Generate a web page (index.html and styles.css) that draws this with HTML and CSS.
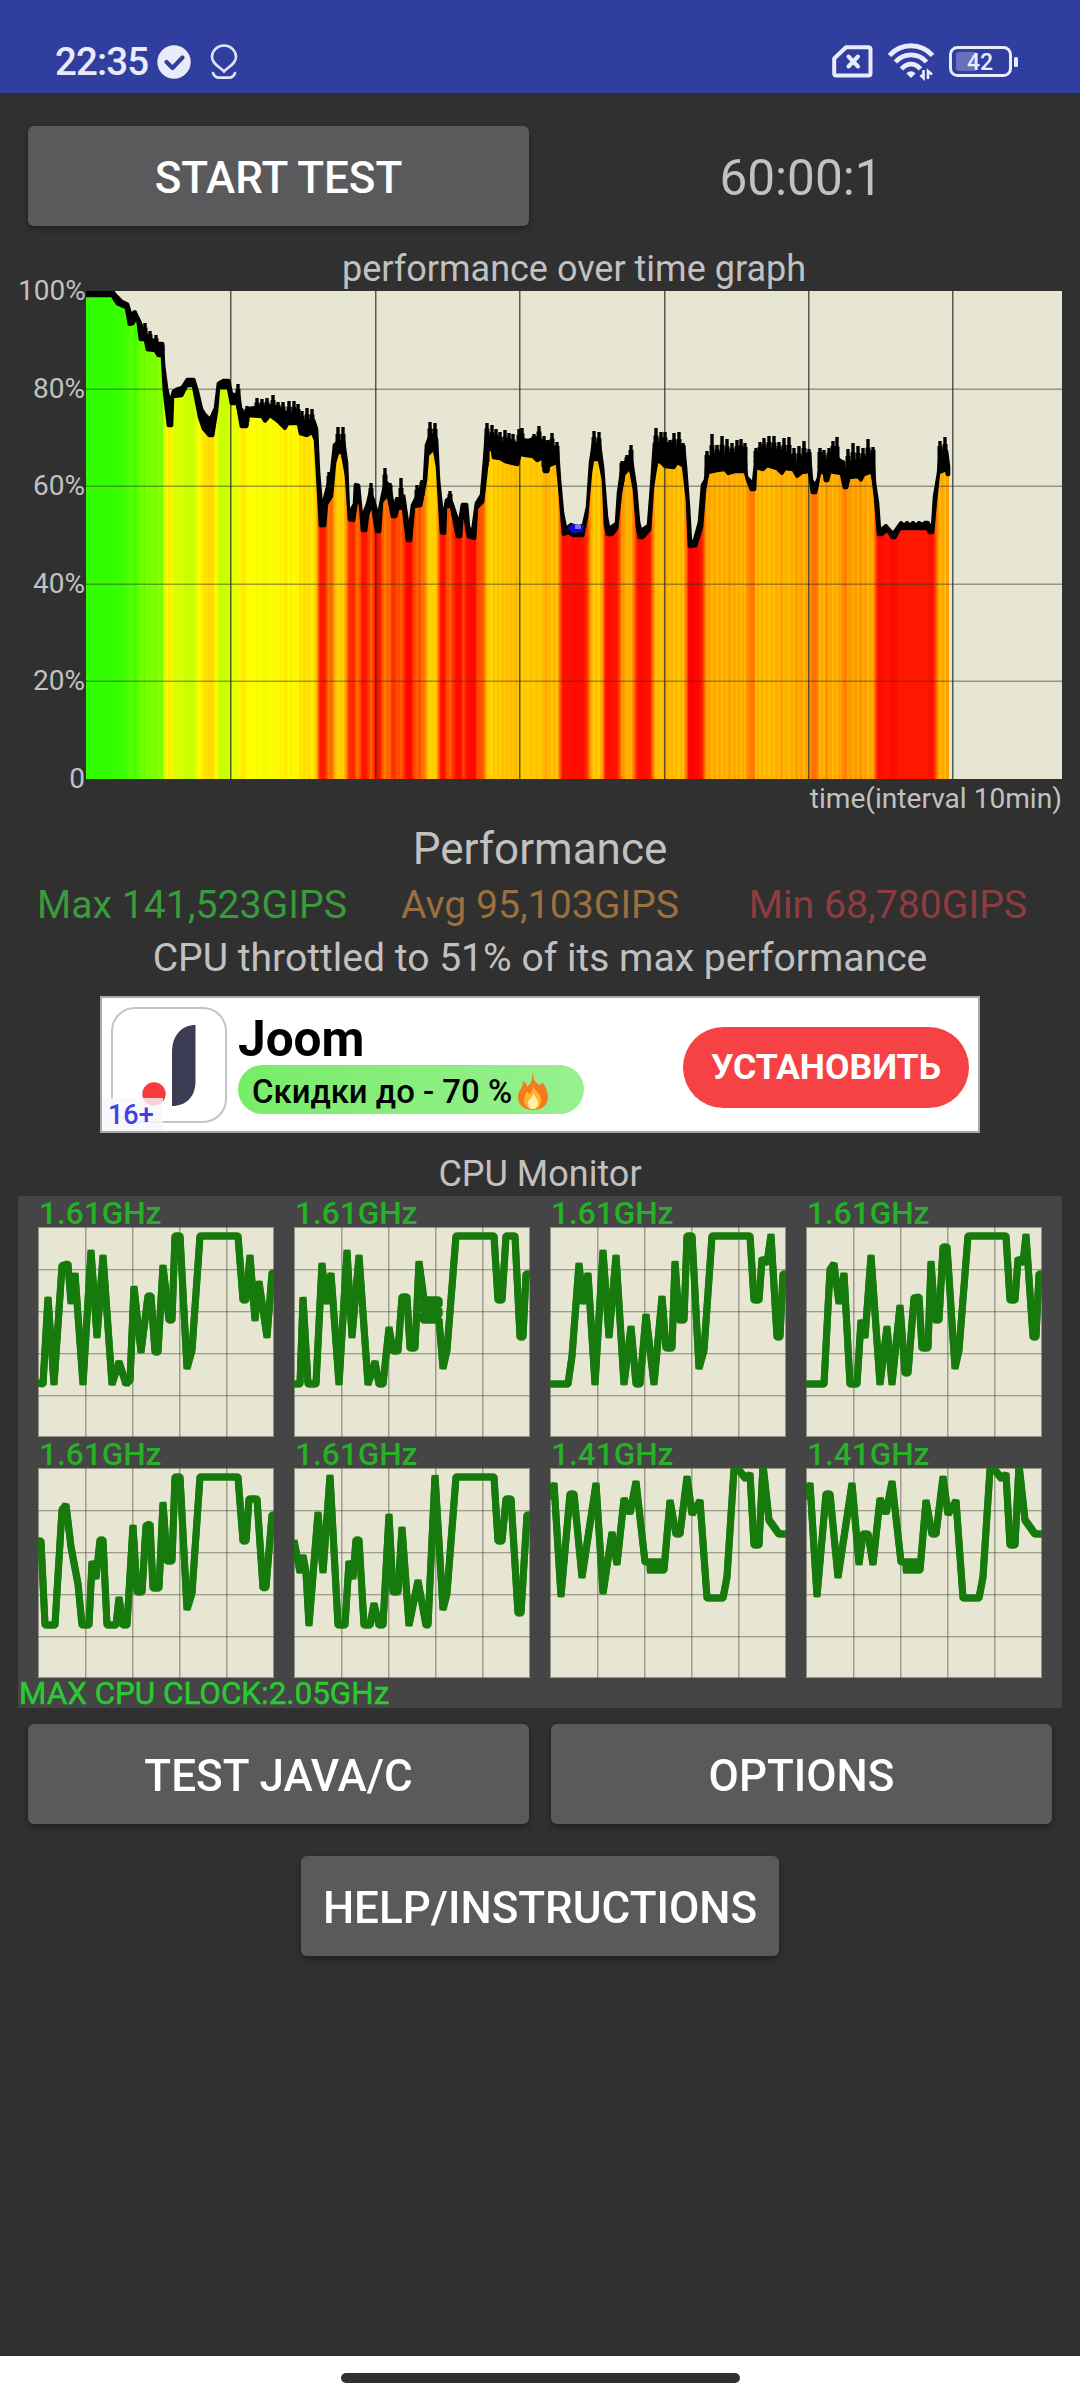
FILE: index.html
```html
<!DOCTYPE html>
<html lang="en">
<head>
  <meta charset="UTF-8">
  <title>CPU Throttling Test</title>
  <link rel="stylesheet" href="styles.css">
</head>
<body>
  <div class="statusbar">
    <div class="status-left">
      <span class="clock">22:35</span>
      <svg class="ic-check" width="34" height="34" viewBox="0 0 34 34"><circle cx="17" cy="17" r="16.7" fill="#e9ebf8"/><path d="M9.5 17l6 6 10-10.500" fill="none" stroke="#303f9f" stroke-width="4.200" stroke-linecap="round" stroke-linejoin="round"/></svg>
      <svg class="ic-pin" width="28" height="36" viewBox="0 0 28 36" fill="none" stroke="#dfe3f6" stroke-width="2.600" stroke-linecap="round"><path d="M14 27.500C9 22.500 2 19.500 2 13A12 11.500 0 0 1 26 13C26 19.500 19 22.500 14 27.500Z"/><path d="M3 29c1 3 3 4.600 6 4.600h10c3 0 5-1.600 6-4.600"/></svg>
    </div>
    <div class="status-right">
      <svg class="ic-sim" width="41" height="33" viewBox="0 0 41 33" fill="none" stroke="#e9ebff"><path d="M14 2.200H36.500a2 2 0 0 1 2 2V28.500a2 2 0 0 1-2 2H4.200a2 2 0 0 1-2-2V13.500Z" stroke-width="4" stroke-linejoin="round"/><path d="M16.500 11.500l9.500 10M26 11.500l-9.500 10" stroke-width="4" stroke-linecap="round"/></svg>
      <svg class="ic-wifi" width="48" height="38" viewBox="0 0 48 38" fill="none" stroke="#e9ebff" stroke-width="4.800"><path d="M2.500 12.500C14-.5 34-.5 45.500 12.500"/><path d="M8.500 19C17 9.500 31 9.500 39.500 19"/><path d="M14.500 26C20 19.500 28 19.500 33.500 26"/><path d="M24 35l-4.500-4.500c2.500-3 6.500-3 9 0Z" fill="#e9ebff" stroke="none"/><path d="M36.500 27v8l-3-3M41 36v-8l4 3.500" stroke-width="2.600"/></svg>
      <svg class="ic-battery" width="70" height="32" viewBox="0 0 70 32"><rect x="1.500" y="1.500" width="60" height="28" rx="7" fill="none" stroke="#e9ebff" stroke-width="3"/><rect x="7" y="6" width="21" height="19" rx="3" fill="#6770b8"/><rect x="65" y="11" width="4" height="10" rx="1.500" fill="#e9ebff"/><text x="31" y="24" class="battery-text">42</text></svg>
    </div>
  </div>

  <main>
    <div class="toolbar">
      <button class="btn">START TEST</button>
      <div class="timer">60:00:1</div>
    </div>

    <div class="title graph-title">performance over time graph</div>
    <div class="graph">
      <div class="y-axis">
        <span>100%</span>
        <span>80%</span>
        <span>60%</span>
        <span>40%</span>
        <span>20%</span>
        <span>0</span>
      </div>
      <canvas id="graph" width="976" height="488"></canvas>
    </div>
    <div class="x-axis">time(interval 10min)</div>

    <div class="heading">Performance</div>
    <div class="stats">
      <span class="max">Max 141,523GIPS</span>
      <span class="avg">Avg 95,103GIPS</span>
      <span class="min">Min 68,780GIPS</span>
    </div>
    <div class="result">CPU throttled to 51% of its max performance</div>

    <div class="ad">
      <div class="ad-icon">
        <svg width="113" height="113" viewBox="0 0 113 113"><path d="M59 97V43C59 26 69 16 82.500 16V72C82.500 88 73 97 59 97Z" fill="#3c3d54"/><circle cx="41" cy="85" r="11.700" fill="#f83c3e"/></svg>
        <span class="age">16+</span>
      </div>
      <div class="ad-text">
        <div class="ad-name">Joom</div>
        <div class="ad-offer">
          <span>Скидки до - 70 %</span>
          <svg width="30" height="38" viewBox="0 0 30 38"><path d="M14 0c2 5 1 7 4 10 3 4 5 4 6 0 4 5 6 10 6 15 0 8-6 13-15 13S0 33 0 25C0 18 5 17 5 9c3 2 4 4 4 6C14 11 15 6 14 0Z" fill="#f6791d"/><path d="M15 12c0 6 8 9 8 16 0 6-3 9-8 9s-9-3-9-9c0-4 2-6 3-9 1 2 2 3 3 3 2-2 3-6 3-10Z" fill="#ffb52e"/><path d="M16 21c1 5 4 6 4 10s-2 6-5 6-5-2-5-6 5-5 6-10Z" fill="#fff0a8"/></svg>
        </div>
      </div>
      <div class="ad-install">УСТАНОВИТЬ</div>
    </div>

    <div class="title monitor-title">CPU Monitor</div>
    <div class="monitor">
      <div class="cores">
        <div class="core"><span>1.61GHz</span><canvas width="236" height="210"></canvas></div>
        <div class="core"><span>1.61GHz</span><canvas width="236" height="210"></canvas></div>
        <div class="core"><span>1.61GHz</span><canvas width="236" height="210"></canvas></div>
        <div class="core"><span>1.61GHz</span><canvas width="236" height="210"></canvas></div>
        <div class="core"><span>1.61GHz</span><canvas width="236" height="210"></canvas></div>
        <div class="core"><span>1.61GHz</span><canvas width="236" height="210"></canvas></div>
        <div class="core"><span>1.41GHz</span><canvas width="236" height="210"></canvas></div>
        <div class="core"><span>1.41GHz</span><canvas width="236" height="210"></canvas></div>
      </div>
      <div class="max-clock">MAX CPU CLOCK:2.05GHz</div>
    </div>

    <div class="buttons">
      <button class="btn">TEST JAVA/C</button>
      <button class="btn">OPTIONS</button>
    </div>
    <button class="btn help">HELP/INSTRUCTIONS</button>
  </main>

  <div class="navbar"><div class="handle"></div></div>

  <script src="graphs.js"></script>
</body>
</html>
```
FILE: styles.css
```css
* {
  margin: 0;
  padding: 0;
  box-sizing: border-box;
}

body {
  display: flex;
  flex-direction: column;
  width: 1080px;
  height: 2400px;
  background-color: #303030;
  color: #c1c1c1;
  font-family: Roboto, "Noto Sans", sans-serif;
  overflow: hidden;
}

canvas, svg {
  display: block;
}

/* status bar */
.statusbar {
  display: flex;
  justify-content: space-between;
  height: 93px;
  padding: 0 61px 0 55px;
  background-color: #303f9f;
}

.status-left, .status-right {
  display: flex;
  align-items: center;
  padding-top: 30px;
}

.clock {
  width: 95px;
  font-size: 38.5px;
  font-weight: 500;
  line-height: 44px;
  letter-spacing: -0.9px;
  white-space: nowrap;
  color: #e9ebf8;
}

.ic-check {
  margin-left: 7px;
}

.ic-pin {
  margin-left: 19px;
}

.ic-wifi {
  margin-left: 14px;
}

.ic-battery {
  margin-left: 14px;
}

.battery-text {
  font: 500 23px Roboto, sans-serif;
  text-anchor: middle;
  fill: #e9ebff;
}

main {
  flex: 1;
  display: flex;
  flex-direction: column;
  padding: 33px 18px 0;
}

.btn {
  width: 501px;
  height: 100px;
  padding-top: 3px;
  border: none;
  border-radius: 6px;
  background-color: #5a5a5c;
  box-shadow: 0 3px 6px rgba(0, 0, 0, 0.35);
  color: white;
  font: 500 44px Roboto, sans-serif;
}

.toolbar {
  display: flex;
  align-items: center;
  gap: 11px;
  height: 120px;
  padding: 0 0 20px 10px;
}

.timer {
  flex: 1;
  padding-top: 4px;
  text-align: center;
  font-size: 49.5px;
  line-height: 60px;
}

.title {
  padding-top: 1px;
  text-align: center;
  font-size: 36px;
  line-height: 44px;
}

.graph-title {
  padding-left: 68px;
}

/* performance graph */
.graph {
  display: flex;
  height: 488px;
}

.y-axis {
  display: flex;
  flex-direction: column;
  justify-content: space-between;
  width: 68px;
  height: 516px;
  margin-top: -14px;
  padding-right: 1px;
  text-align: right;
  font-size: 28px;
  line-height: 28px;
}

.x-axis {
  text-align: right;
  font-size: 28.1px;
  line-height: 40px;
  height: 39px;
}

.heading {
  text-align: center;
  font-size: 44px;
  line-height: 62px;
}

.stats {
  display: grid;
  grid-template-columns: repeat(3, 1fr);
  text-align: center;
  font-size: 39.2px;
  line-height: 50px;
}

.max {
  color: #3a9a3c;
}

.avg {
  color: #9b6f3e;
}

.min {
  color: #8f3c3e;
}

.result {
  text-align: center;
  font-size: 39.1px;
  line-height: 56px;
}

/* ad banner */
.ad {
  display: flex;
  width: 880px;
  height: 137px;
  margin: 10px auto 0;
  padding: 9px;
  border: 2px solid #a8a8a8;
  background-color: white;
  color: black;
}

.ad-icon {
  position: relative;
  width: 116px;
  height: 116px;
  border: 2px solid #c4c4c8;
  border-radius: 24px;
}

.age {
  position: absolute;
  left: -11px;
  top: 89px;
  width: 61px;
  height: 33px;
  padding-left: 6px;
  background-color: rgba(248, 248, 253, 0.8);
  color: #4340e0;
  font-size: 27px;
  font-weight: 500;
  line-height: 34px;
}

.ad-text {
  margin-left: 11px;
}

.ad-name {
  height: 58px;
  font-size: 49.5px;
  font-weight: 700;
  line-height: 65px;
}

.ad-offer {
  display: flex;
  align-items: center;
  gap: 6px;
  width: 346px;
  height: 49px;
  padding: 3px 0 0 14px;
  border-radius: 25px;
  background: linear-gradient(90deg, #78ec68, #98f090);
  font-size: 32.9px;
  font-weight: 500;
  white-space: nowrap;
}

.ad-install {
  width: 286px;
  height: 81px;
  margin: 20px 0 0 99px;
  border-radius: 41px;
  background-color: #f64244;
  color: white;
  font-size: 35.6px;
  font-weight: 700;
  line-height: 81px;
  text-align: center;
}

/* cpu monitor */
.monitor-title {
  margin-top: 18px;
}

.monitor {
  height: 512px;
  background-color: #454545;
}

.cores {
  display: grid;
  grid-template-columns: repeat(4, 236px);
  column-gap: 20px;
  padding-left: 20px;
}

.core span {
  display: block;
  height: 31px;
  padding-left: 1px;
  color: #28b028;
  font-size: 31.6px;
  font-weight: 500;
  line-height: 35px;
}

.max-clock {
  padding-left: 1px;
  color: #2dc832;
  font-size: 31.4px;
  line-height: 31px;
  -webkit-text-stroke: 0.6px #2dc832;
}

.buttons {
  display: flex;
  gap: 22px;
  margin-top: 16px;
  padding-left: 10px;
}

.help {
  width: 478px;
  margin: 32px auto 0;
}

.navbar {
  height: 44px;
  padding-top: 17px;
  background-color: white;
}

.handle {
  width: 399px;
  height: 10px;
  margin: 0 auto;
  border-radius: 5px;
  background-color: #303030;
}
```
FILE: graphs.js
```js
// upper and lower edge of the performance line, x,y pairs
const upper = [0,0, 27,0, 30,4, 36,10, 42,13, 45,23, 49,20, 54,30, 57,38, 61,44, 67,49, 72,52, 77,52, 78,74, 81,97, 84,111, 87,100, 90,98, 96,96, 101,88, 108,88, 112,101, 116,118, 119,123, 124,128, 129,117, 132,92, 137,89, 143,89, 146,103, 153,103, 155,117, 160,124, 162,117, 171,116, 187,114, 200,121, 212,123, 216,130, 226,129, 228,129, 231,138, 233,181, 236,216, 239,204, 242,192, 245,182, 248,154, 252,150, 258,150, 261,172, 263,222, 268,213, 269,193, 273,194, 276,226, 281,213, 284,200, 288,209, 292,224, 295,209, 299,190, 304,194, 307,212, 313,209, 318,204, 323,239, 326,214, 332,202, 336,192, 338,189, 340,154, 344,144, 349,144, 351,148, 353,189, 357,227, 360,209, 364,206, 367,214, 373,232, 376,213, 381,213, 383,236, 386,241, 390,212, 395,204, 398,169, 400,142, 406,148, 414,151, 427,154, 436,148, 442,149, 453,146, 458,153, 466,153, 472,160, 474,189, 477,222, 480,237, 485,233, 491,236, 497,234, 501,216, 504,172, 507,152, 514,154, 517,176, 521,226, 523,237, 530,232, 532,202, 536,174, 545,164, 547,176, 550,196, 553,231, 555,239, 562,234, 565,196, 568,152, 580,152, 588,155, 598,155, 600,176, 603,216, 605,251, 608,249, 613,231, 616,194, 619,189, 621,168, 632,162, 645,163, 659,160, 661,186, 667,192, 670,163, 683,157, 703,162, 711,172, 718,164, 724,164, 726,189, 729,194, 732,187, 734,165, 740,171, 747,160, 754,169, 758,171, 760,191, 762,172, 772,169, 778,168, 787,162, 789,192, 792,212, 794,239, 800,234, 807,242, 815,231, 818,234, 821,231, 824,234, 827,231, 830,234, 833,231, 836,233, 839,231, 842,231, 846,237, 848,206, 852,182, 854,160, 861,160, 863,176];
const lower = [0,5, 26,5, 31,13, 40,17, 43,34, 47,33, 51,26, 54,49, 59,49, 61,59, 69,60, 72,65, 76,65, 78,101, 82,135, 86,135, 87,106, 96,105, 101,95, 107,95, 113,126, 117,138, 123,145, 127,145, 131,120, 133,97, 142,97, 145,113, 151,113, 155,136, 161,136, 162,125, 176,126, 179,131, 184,125, 192,131, 199,138, 202,133, 212,133, 214,143, 221,145, 226,142, 229,149, 232,199, 234,235, 239,235, 241,213, 246,205, 249,172, 252,162, 256,162, 260,185, 263,229, 268,230, 271,210, 274,213, 276,240, 280,240, 282,224, 286,213, 290,241, 294,241, 296,211, 302,204, 306,226, 310,226, 312,218, 317,217, 321,250, 325,250, 328,216, 335,215, 340,189, 342,164, 348,158, 351,176, 355,242, 359,243, 360,216, 365,216, 371,246, 375,246, 377,217, 382,246, 389,248, 391,217, 397,211, 401,176, 402,159, 406,159, 407,167, 414,168, 419,171, 427,173, 432,174, 434,164, 447,166, 451,170, 457,167, 458,181, 462,181, 463,175, 471,172, 474,206, 477,244, 482,242, 487,245, 497,245, 501,226, 505,181, 507,169, 513,169, 517,189, 519,234, 521,244, 526,244, 531,238, 535,202, 538,184, 544,177, 548,199, 551,237, 553,247, 557,247, 564,239, 567,196, 571,170, 575,172, 579,176, 588,177, 591,172, 597,175, 601,209, 603,256, 610,255, 616,236, 619,199, 622,182, 631,180, 639,179, 642,183, 649,181, 659,181, 661,189, 665,199, 669,199, 670,177, 677,179, 681,175, 691,178, 696,183, 699,178, 707,179, 711,186, 716,182, 723,181, 726,202, 730,202, 734,182, 738,182, 739,190, 742,190, 744,181, 755,183, 758,197, 761,197, 763,187, 772,186, 775,190, 778,184, 786,181, 789,206, 792,244, 796,244, 801,239, 806,247, 809,247, 814,238, 841,238, 843,242, 847,242, 850,209, 853,182, 860,179, 861,184, 863,184];
// short peaks of the line
const spikes = [59,32, 64,40, 70,44, 76,52, 49,20, 152,93, 161,115, 171,107, 176,108, 181,107, 187,104, 192,111, 197,111, 203,110, 208,110, 212,113, 216,120, 221,117, 226,118, 243,181, 252,136, 257,136, 271,193, 285,192, 299,177, 304,192, 311,206, 315,187, 331,194, 336,189, 344,131, 349,132, 364,200, 401,132, 406,134, 410,138, 414,141, 419,139, 423,142, 427,143, 433,138, 436,137, 442,148, 448,143, 453,135, 458,145, 462,149, 466,142, 471,151, 508,140, 513,141, 536,170, 541,164, 545,154, 570,137, 575,141, 579,141, 584,149, 588,142, 593,141, 597,152, 621,160, 626,143, 631,154, 636,145, 641,148, 646,152, 651,149, 655,148, 659,152, 670,157, 674,151, 678,147, 683,145, 688,145, 693,151, 698,147, 703,146, 708,157, 713,155, 718,150, 723,158, 734,157, 738,159, 743,157, 747,150, 751,146, 762,158, 767,152, 772,155, 777,157, 782,148, 787,156, 854,150, 859,146];

// bar colour by height of the line: y, red, green
const shades = [[0, 44, 255], [20, 64, 255], [60, 128, 255], [90, 190, 255], [105, 216, 255], [126, 255, 255], [145, 255, 220], [162, 255, 205], [175, 255, 180], [190, 255, 145], [205, 255, 104], [220, 255, 66], [235, 255, 28], [245, 255, 12], [260, 250, 0]];

function yAt(list, x) {
  for (let i = 2; i < list.length; i += 2) {
    if (x <= list[i]) {
      const t = (x - list[i - 2]) / (list[i] - list[i - 2]);
      return list[i - 1] + t * (list[i + 1] - list[i - 1]);
    }
  }
  return list[list.length - 1];
}

function shade(y) {
  y = Math.max(0, Math.min(259, y));
  let i = 1;
  while (shades[i][0] < y) i++;
  const a = shades[i - 1], b = shades[i];
  const t = (y - a[0]) / (b[0] - a[0]);
  return `rgb(${Math.round(a[1] + t * (b[1] - a[1]))}, ${Math.round(a[2] + t * (b[2] - a[2]))}, 0)`;
}

function drawGraph() {
  const c = document.getElementById('graph').getContext('2d');
  c.fillStyle = '#e6e6d2';
  c.fillRect(0, 0, 976, 488);

  for (let x = 0; x < 863; x++) {
    const y = yAt(lower, x + 0.5);
    c.fillStyle = shade(y);
    c.fillRect(x, y - 2, 1, 490 - y);
  }
  for (let i = 0; i < spikes.length; i += 2) {
    const y = yAt(lower, spikes[i]);
    c.fillStyle = shade(y - 8);
    c.fillRect(spikes[i] - 1, y - 2, 2, 490 - y);
  }

  c.fillStyle = 'rgba(40, 40, 40, 0.75)';
  for (let i = 1; i <= 6; i++) c.fillRect(Math.round(i * 144.4), 0, 1.5, 488);
  c.fillStyle = 'rgba(50, 50, 40, 0.45)';
  for (let i = 1; i <= 4; i++) c.fillRect(0, Math.round(i * 97.6) - 0.5, 976, 1.5);

  c.fillStyle = 'black';
  c.beginPath();
  for (let i = 0; i < upper.length; i += 2) c.lineTo(upper[i], upper[i + 1]);
  for (let i = lower.length - 2; i >= 0; i -= 2) c.lineTo(lower[i], lower[i + 1]);
  c.fill();
  c.lineWidth = 2.6;
  c.lineJoin = 'bevel';
  c.stroke();
  for (let i = 0; i < spikes.length; i += 2) {
    const x = spikes[i], y = spikes[i + 1];
    const bottom = yAt(lower, x) - 1;
    const mid = y + Math.max(2, (yAt(upper, x) - y) * 0.5);
    c.fillRect(x - 1.7, y, 3.4, bottom - y);
    c.fillRect(x - 2.5, mid, 5, Math.max(0, bottom - mid - 4));
  }

  // lowest stretch
  c.fillStyle = '#0a0ad8';
  c.beginPath();
  c.moveTo(482, 238);
  c.lineTo(485, 233);
  c.lineTo(498, 234);
  c.lineTo(497, 241);
  c.lineTo(486, 242);
  c.fill();
  c.fillStyle = '#7878e8';
  c.fillRect(489, 234, 6, 4);
}

const cores = [
  '0,156 5,157 10,71 16,157 24,39 30,37 33,76 37,47 45,157 53,24 59,110 65,29 74,157 81,135 88,157 92,153 96,60 103,125 110,69 113,69 117,125 120,125 125,39 131,93 134,93 137,9 142,9 149,141 154,123 162,9 200,9 205,73 208,73 212,29 217,93 221,55 229,110 234,46 236,46',
  '0,157 6,157 9,71 14,157 22,157 28,37 32,76 37,47 45,157 53,24 58,110 65,29 74,157 81,135 85,157 89,157 95,101 99,124 104,124 108,70 113,70 116,121 121,121 125,35 130,73 145,73 145,78 129,78 129,83 145,83 145,88 129,88 129,93 145,93 149,141 153,123 162,9 200,9 204,73 208,73 212,9 221,9 226,110 229,110 232,47 236,47',
  '0,157 18,157 22,129 29,37 33,76 38,47 45,157 53,24 59,110 66,29 74,157 81,100 86,157 90,157 96,88 104,157 112,70 116,121 122,121 125,35 129,93 134,93 137,9 142,9 149,141 154,123 162,9 200,9 204,73 209,73 212,32 217,36 221,8 227,110 230,110 233,47 236,47',
  '0,157 18,157 24,43 28,37 33,76 38,47 44,157 51,157 55,94 59,110 65,29 74,157 81,100 86,157 94,79 99,146 102,146 108,71 113,70 116,121 122,121 125,35 129,93 133,93 137,20 141,20 149,141 153,123 162,9 200,9 204,73 209,73 212,32 217,36 220,8 227,110 230,110 233,47 236,47',
  '0,73 3,73 7,157 17,157 24,42 28,37 33,79 40,116 44,157 51,157 54,94 58,110 62,72 65,72 69,157 78,157 81,130 85,157 89,157 95,58 99,124 104,124 108,58 112,56 115,120 121,120 125,35 129,93 134,93 137,9 142,9 149,141 154,125 162,9 200,9 205,73 208,73 211,31 219,31 225,120 228,119 234,47 236,47',
  '0,73 3,88 6,104 9,88 12,104 15,157 24,45 29,104 36,8 44,157 51,157 55,94 59,110 62,72 65,72 70,157 76,157 80,136 85,157 89,157 95,47 99,124 104,124 108,60 115,157 124,113 132,157 134,157 141,8 149,141 153,125 162,9 200,9 204,73 208,73 212,31 217,31 224,145 227,145 233,47 236,47',
  '0,30 4,16 11,128 20,26 24,26 32,109 46,16 53,125 62,65 67,96 74,31 80,45 86,14 95,94 114,94 98,98 113,98 98,102 114,102 120,33 126,66 130,66 137,9 142,46 150,33 157,130 173,130 177,109 184,1 188,1 196,11 200,6 204,77 209,77 213,-3 219,52 229,66 236,66',
  '0,30 4,16 11,128 20,26 24,26 32,109 46,16 53,96 57,66 62,66 67,96 74,31 80,45 86,14 95,94 114,94 98,98 113,98 98,102 114,102 120,33 126,66 130,66 137,9 142,46 150,33 157,130 173,130 177,109 184,1 188,1 196,11 200,6 204,77 209,77 213,-3 219,52 229,66 236,66'
];

function drawCore(canvas, data) {
  const c = canvas.getContext('2d');
  c.fillStyle = '#e6e6d2';
  c.fillRect(0, 0, 236, 210);
  c.fillStyle = 'rgba(70, 70, 60, 0.45)';
  for (let i = 1; i <= 4; i++) {
    c.fillRect(Math.round(i * 47.1), 0, 1.5, 210);
    c.fillRect(0, Math.round(i * 41.9), 236, 1.3);
  }
  c.strokeStyle = 'rgba(70, 70, 60, 0.5)';
  c.strokeRect(0.5, 0.5, 235, 209);

  c.strokeStyle = '#167a0c';
  c.lineWidth = 5.2;
  c.lineJoin = 'bevel';
  // the pen is taller than it is wide
  [[-0.9, -1], [0.9, -1], [-0.9, 1], [0.9, 1]].forEach(([dx, dy]) => {
    c.beginPath();
    data.split(' ').forEach(p => {
      const [x, y] = p.split(',').map(Number);
      c.lineTo(x + dx, y + dy);
    });
    c.stroke();
  });
}

drawGraph();
document.querySelectorAll('.core canvas').forEach((canvas, i) => drawCore(canvas, cores[i]));
```
